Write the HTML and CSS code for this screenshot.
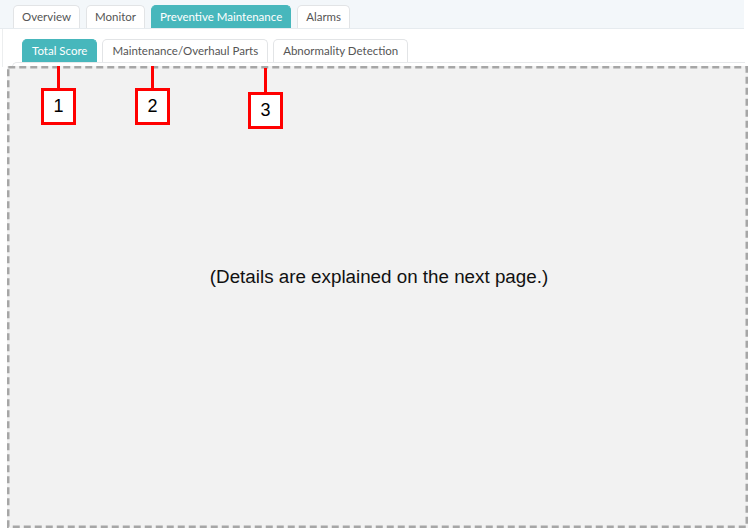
FILE: index.html
```html
<html>
<head>
<meta charset="utf-8">
<title>Preventive Maintenance</title>
<link rel="stylesheet" href="styles.css">
</head>
<body>
<div class="page">
  <div class="topbar">
    <div class="tab">Overview</div>
    <div class="tab">Monitor</div>
    <div class="tab active">Preventive Maintenance</div>
    <div class="tab">Alarms</div>
  </div>
  <div class="panel">
    <div class="subbar">
      <div class="tab active">Total Score</div>
      <div class="tab">Maintenance/Overhaul Parts</div>
      <div class="tab">Abnormality Detection</div>
    </div>
    <div class="inner"></div>
  </div>
  <div class="area">
    <svg class="dash" width="741" height="462">
      <rect x="1.25" y="1.25" width="738.5" height="459.5" fill="none"
        stroke="#a6a6a6" stroke-width="2.5" stroke-dasharray="7 4"/>
    </svg>
    <div class="note">(Details are explained on the next page.)</div>
  </div>

  <div class="mark m1"><div class="stem"></div><div class="num">1</div></div>
  <div class="mark m2"><div class="stem"></div><div class="num">2</div></div>
  <div class="mark m3"><div class="stem"></div><div class="num">3</div></div>
</div>
</body>
</html>
```

FILE: styles.css
```css
body {
    margin: 0;
    background: #ffffff;
    font-family: Lato, "Noto Sans", sans-serif;
}
.page {
    position: relative;
    width: 750px;
    height: 529px;
    overflow: hidden;
}
.topbar {
    width: 731px;
    height: 28px;
    padding-left: 13px;
    background: #f3f7fa;
    border-bottom: 1px solid #e6ebef;
    display: flex;
    align-items: flex-end;
    gap: 6px;
}
.tab {
    height: 22px;
    padding: 0 8px;
    font-size: 11.5px;
    line-height: 22px;
    color: #555555;
    background: #ffffff;
    border: 1px solid #e2e4e6;
    border-bottom: none;
    border-radius: 5px 5px 0 0;
}
.tab.active {
    background: #47b7bc;
    border-color: #47b7bc;
    color: #ffffff;
}
.panel {
    margin-left: 2px;
    width: 742px;
    border-left: 1px solid #eceeef;
}
.subbar {
    height: 33px;
    padding-left: 19px;
    display: flex;
    align-items: flex-end;
    gap: 5px;
}
.subbar .tab {
    padding: 0 9px;
}
.inner {
    margin-left: 9px;
    height: 4px;
    border-top: 1px solid #e6e8ea;
    border-left: 1px solid #e6e8ea;
    border-radius: 5px 0 0 0;
}
.area {
    position: absolute;
    left: 7px;
    top: 66px;
    width: 741px;
    height: 462px;
    background: #f2f2f2;
    display: flex;
    align-items: center;
    justify-content: center;
}
.dash {
    position: absolute;
    left: 0;
    top: 0;
}
.note {
    font-family: "Liberation Sans", Arial, sans-serif;
    font-size: 18.8px;
    color: #111111;
    margin-top: -40px;
    margin-left: 3px;
}
.mark {
    position: absolute;
    display: flex;
    flex-direction: column;
    align-items: center;
}
.stem {
    width: 3px;
    height: 22px;
    background: #ff0000;
}
.num {
    width: 29px;
    height: 31px;
    border: 3px solid #ff0000;
    background: #ffffff;
    font-family: "Liberation Sans", Arial, sans-serif;
    font-size: 18px;
    line-height: 31px;
    text-align: center;
    color: #000000;
}
.m1 { left: 41px; top: 66px; }
.m2 { left: 135px; top: 66px; }
.m3 { left: 248px; top: 68px; }
.m3 .stem { height: 24px; }
```
